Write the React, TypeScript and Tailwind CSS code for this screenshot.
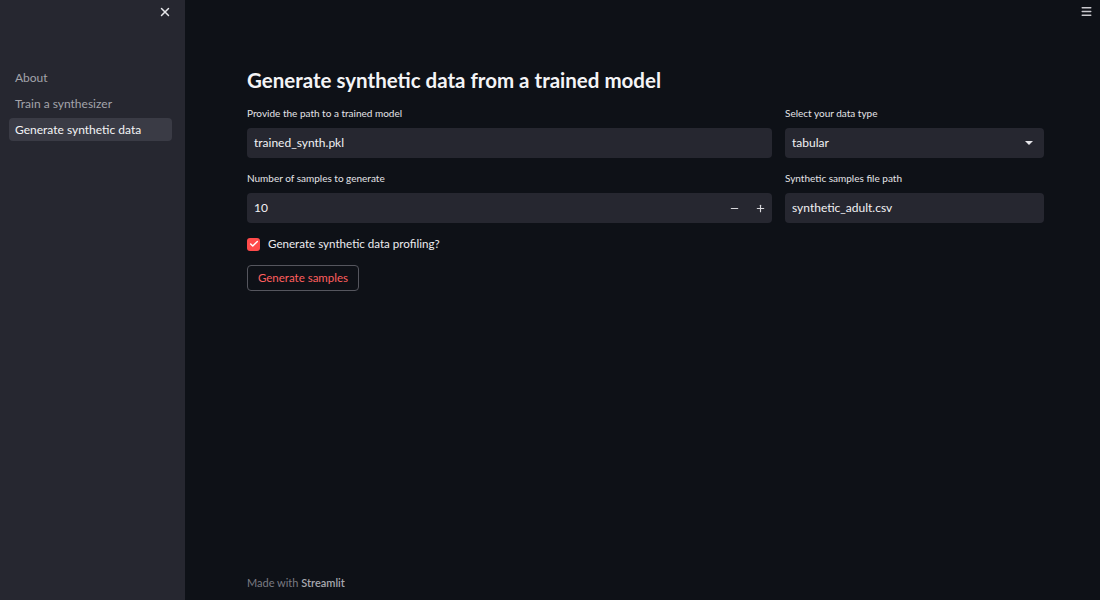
import React from "react";
import { X, Menu, Minus, Plus, Check } from "lucide-react";

const font = { fontFamily: "Lato, 'Open Sans', sans-serif" };

const NavItem: React.FC<{ label: string; active?: boolean }> = ({ label, active }) => (
  <div
    className={
      "h-[23px] px-[6px] ml-[9px] mr-[13px] flex items-center rounded text-[12px] " +
      (active ? "bg-[#3a3b45] text-[#f4f4f6]" : "text-[#a3a4ab]")
    }
  >
    {label}
  </div>
);

const Label: React.FC<{ children: React.ReactNode }> = ({ children }) => (
  <div className="text-[10px] text-[#e4e4e8] h-[15px] mt-[2px] mb-[7px] leading-[15px]">{children}</div>
);

const Field: React.FC<{ children: React.ReactNode }> = ({ children }) => (
  <div className="h-[30px] bg-[#262730] rounded flex items-center px-[7px] text-[12px] text-[#f2f2f4]">
    {children}
  </div>
);

export default function App() {
  return (
    <div className="w-[1100px] h-[600px] flex bg-[#0e1117] overflow-hidden" style={font}>
      <aside className="w-[185px] bg-[#262730] flex flex-col">
        <div className="h-[22px] flex justify-end items-center pr-[13px] pt-[2px]">
          <X size={14} strokeWidth={2.5} className="text-[#e6e6ea]" />
        </div>
        <nav className="mt-[44px] flex flex-col gap-[3px]">
          <NavItem label="About" />
          <NavItem label="Train a synthesizer" />
          <NavItem label="Generate synthetic data" active />
        </nav>
      </aside>
      <main className="flex-1 flex flex-col">
        <div className="h-[22px] flex justify-end items-center pr-[7px]">
          <Menu size={13} strokeWidth={2.5} className="text-[#c9c9ce]" />
        </div>
        <div className="pl-[62px] pr-[56px] flex-1 flex flex-col">
          <h1 className="text-[20.5px] font-bold text-[#f4f4f6] mt-[45px] h-[26px] leading-[26px]">
            Generate synthetic data from a trained model
          </h1>
          <div className="grid grid-cols-[525px_259px] gap-x-[13px] mt-[11px] gap-y-[11px]">
            <div>
              <Label>Provide the path to a trained model</Label>
              <Field>trained_synth.pkl</Field>
            </div>
            <div>
              <Label>Select your data type</Label>
              <Field>
                <span className="flex-1">tabular</span>
                <span className="w-0 h-0 border-l-[4px] border-r-[4px] border-t-[4px] border-l-transparent border-r-transparent border-t-[#e6e6ea] mr-[4px]" />
              </Field>
            </div>
            <div>
              <Label>Number of samples to generate</Label>
              <Field>
                <span className="flex-1">10</span>
                <Minus size={11} strokeWidth={2.5} className="text-[#d8d8dc] mr-[15px]" />
                <Plus size={11} strokeWidth={2.5} className="text-[#d8d8dc] -mr-[1px]" />
              </Field>
            </div>
            <div>
              <Label>Synthetic samples file path</Label>
              <Field>synthetic_adult.csv</Field>
            </div>
          </div>
          <label className="flex items-center mt-[12px] h-[18px]">
            <span className="w-[13px] h-[13px] rounded-[3px] bg-[#ff4b4b] flex items-center justify-center">
              <Check size={10} strokeWidth={3.5} className="text-white" />
            </span>
            <span className="ml-[8px] text-[11.6px] text-[#ececef]">Generate synthetic data profiling?</span>
          </label>
          <div className="mt-[12px]">
            <button className="h-[26px] w-[112px] rounded border border-[#55565e] text-[11.5px] text-[#ff5f5f] flex items-center justify-center">
              Generate samples
            </button>
          </div>
          <div className="mt-auto mb-[9px] text-[11px] text-[#7a7b82]">
            Made with <span className="text-[#a6a7ae] font-semibold">Streamlit</span>
          </div>
        </div>
      </main>
    </div>
  );
}
